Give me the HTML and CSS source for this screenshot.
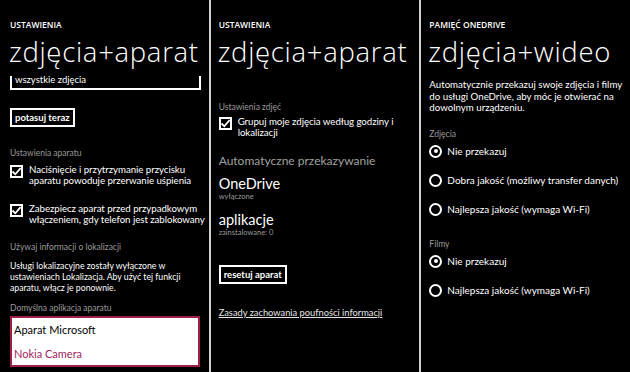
FILE: index.html
```html
<!DOCTYPE html>
<html lang="pl">
<head>
<meta charset="utf-8">
<link rel="stylesheet" href="styles.css">
</head>
<body>
<div class="screens">
  <section class="panel p1">
    <div class="app-title">USTAWIENIA</div>
    <div class="page-title">zdjęcia+aparat</div>
    <div class="scroll">
      <div class="picker-tail">wszystkie zdjęcia</div>
      <div class="btn-row"><span class="btn">potasuj teraz</span></div>
      <div class="label l-aparat">Ustawienia aparatu</div>
      <div class="check">
        <span class="box"><svg viewBox="0 0 13 13" width="13" height="13"><path d="M2.5 6.5 L5.3 9.3 L10.6 3.2" fill="none" stroke="#fff" stroke-width="1.8"/></svg></span>
        <span class="ctext">Naciśnięcie i przytrzymanie przycisku<br>aparatu powoduje przerwanie uśpienia</span>
      </div>
      <div class="check c2">
        <span class="box"><svg viewBox="0 0 13 13" width="13" height="13"><path d="M2.5 6.5 L5.3 9.3 L10.6 3.2" fill="none" stroke="#fff" stroke-width="1.8"/></svg></span>
        <span class="ctext">Zabezpiecz aparat przed przypadkowym<br>włączeniem, gdy telefon jest zablokowany</span>
      </div>
      <div class="label l-lok">Używaj informacji o lokalizacji</div>
      <p class="para p-lok">Usługi lokalizacyjne zostały wyłączone w<br>ustawieniach Lokalizacja. Aby użyć tej funkcji<br>aparatu, włącz je ponownie.</p>
      <div class="label l-def">Domyślna aplikacja aparatu</div>
      <div class="listbox">
        <div class="opt">Aparat Microsoft</div>
        <div class="opt sel">Nokia Camera</div>
      </div>
    </div>
  </section>
  <div class="sep"></div>
  <section class="panel p2">
    <div class="app-title">USTAWIENIA</div>
    <div class="page-title">zdjęcia+aparat</div>
    <div class="label l-zdj">Ustawienia zdjęć</div>
    <div class="check">
      <span class="box"><svg viewBox="0 0 13 13" width="13" height="13"><path d="M2.5 6.5 L5.3 9.3 L10.6 3.2" fill="none" stroke="#fff" stroke-width="1.8"/></svg></span>
      <span class="ctext">Grupuj moje zdjęcia według godziny i<br>lokalizacji</span>
    </div>
    <div class="group-head">Automatyczne przekazywanie</div>
    <div class="item">
      <div class="item-title">OneDrive</div>
      <div class="item-sub">wyłączone</div>
    </div>
    <div class="item">
      <div class="item-title">aplikacje</div>
      <div class="item-sub">zainstalowane: 0</div>
    </div>
    <div class="btn-row reset"><span class="btn">resetuj aparat</span></div>
    <a class="link">Zasady zachowania poufności informacji</a>
  </section>
  <div class="sep"></div>
  <section class="panel p3">
    <div class="app-title">PAMIĘĆ ONEDRIVE</div>
    <div class="page-title">zdjęcia+wideo</div>
    <p class="para intro">Automatycznie przekazuj swoje zdjęcia i filmy<br>do usługi OneDrive, aby móc je otwierać na<br>dowolnym urządzeniu.</p>
    <div class="label l-z">Zdjęcia</div>
    <div class="radio on first"><span class="dot"></span><span>Nie przekazuj</span></div>
    <div class="radio"><span class="dot"></span><span>Dobra jakość (możliwy transfer danych)</span></div>
    <div class="radio"><span class="dot"></span><span>Najlepsza jakość (wymaga Wi-Fi)</span></div>
    <div class="label l-f">Filmy</div>
    <div class="radio on first"><span class="dot"></span><span>Nie przekazuj</span></div>
    <div class="radio"><span class="dot"></span><span>Najlepsza jakość (wymaga Wi-Fi)</span></div>
  </section>
</div>
</body>
</html>
```

FILE: styles.css
```css
html, body {
  margin: 0;
  padding: 0;
  background: #000;
}
body {
  width: 630px;
  height: 372px;
  overflow: hidden;
  color: #fff;
  font-family: Lato, "Open Sans", sans-serif;
}
.screens {
  display: flex;
  height: 372px;
}
.panel {
  width: 209px;
  box-sizing: border-box;
  padding-left: 9px;
  overflow: hidden;
  white-space: nowrap;
}
.p1 { padding-left: 10px; }
.sep {
  width: 2px;
  background: #cfcfcf;
}
.app-title {
  margin-top: 19px;
  font-family: "Open Sans", sans-serif;
  font-size: 8.5px;
  font-weight: 600;
  line-height: 12px;
}
.page-title {
  margin-top: 5px;
  margin-left: -1px;
  font-family: "Open Sans", sans-serif;
  font-size: 27.5px;
  font-weight: 300;
  line-height: 32px;
  letter-spacing: 0.7px;
}
.picker-tail {
  margin-top: 8px;
  width: 184px;
  height: 12px;
  border: 2px solid #fff;
  border-top: none;
  font-size: 9.5px;
  line-height: 8px;
  padding-left: 3px;
  box-sizing: content-box;
}
.btn-row { display: flex; }
.btn {
  border: 2px solid #fff;
  padding: 0 3px;
  font-size: 9.5px;
  font-weight: 700;
  line-height: 15px;
}
.p1 .btn-row { margin-top: 18px; }
.label {
  color: #9a9a9a;
  font-size: 8.5px;
  line-height: 12px;
}
.l-aparat { margin-top: 20px; }
.check {
  display: flex;
  gap: 6px;
  margin-top: 5px;
}
.check.c2 { margin-top: 17px; }
.box {
  flex: none;
  width: 13px;
  height: 13px;
  box-sizing: border-box;
  border: 2px solid #fff;
  position: relative;
  margin-top: 1px;
}
.box svg {
  position: absolute;
  left: -2px;
  top: -2px;
}
.ctext {
  font-size: 9.7px;
  line-height: 11px;
  letter-spacing: -0.05px;
}
.l-lok { margin-top: 16px; }
.para {
  margin: 0;
  font-size: 8.7px;
  line-height: 11px;
}
.p-lok { margin-top: 7px; }
.l-def { margin-top: 9px; }
.listbox {
  margin-top: 2px;
  width: 190px;
  height: 51px;
  box-sizing: border-box;
  border: 2px solid #9e1f4a;
  background: #fff;
  padding: 0 0 0 2px;
}
.opt {
  color: #000;
  font-size: 11px;
  line-height: 24px;
}
.opt.sel { color: #a1255b; }

/* panel 2 */
.p2 { padding-left: 8px; }
.l-zdj { margin-top: 33px; }
.p2 .check { margin-top: 3px; }
.group-head {
  margin-top: 15px;
  color: #a0a0a0;
  font-size: 12px;
  line-height: 16px;
}
.item { margin-top: 6px; }
.item + .item { margin-top: 9px; }
.item-title {
  font-size: 14.5px;
  line-height: 17px;
}
.item-sub {
  color: #9a9a9a;
  font-size: 7.5px;
  line-height: 10px;
}
.btn-row.reset { margin-top: 27px; }
.link {
  display: block;
  margin-top: 23px;
  color: #e6e6e6;
  font-size: 9.3px;
  line-height: 12px;
  text-decoration: underline;
}

/* panel 3 */
.p3 { padding-left: 8px; }
.intro {
  margin-top: 11px;
  font-size: 9.7px;
  line-height: 11.5px;
}
.l-z { margin-top: 14px; }
.l-f { margin-top: 22px; }
.radio {
  display: flex;
  align-items: center;
  gap: 5px;
  margin-top: 16px;
  font-size: 10px;
  line-height: 13px;
  height: 13px;
}
.radio.first { margin-top: 5px; }
.radio .dot {
  flex: none;
  width: 13px;
  height: 13px;
  box-sizing: border-box;
  border: 2px solid #fff;
  border-radius: 50%;
  position: relative;
}
.radio.on .dot::after {
  content: "";
  position: absolute;
  left: 2.5px;
  top: 2.5px;
  width: 4px;
  height: 4px;
  border-radius: 50%;
  background: #fff;
}
```
